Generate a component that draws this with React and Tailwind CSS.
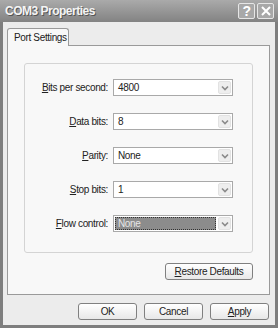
import React from 'react'

const FONT = { fontFamily: '"Liberation Sans", Arial, sans-serif' }

const ROWS = [
  { key: 'B', rest: 'its per second:', value: '4800' },
  { key: 'D', rest: 'ata bits:', value: '8' },
  { key: 'P', rest: 'arity:', value: 'None' },
  { key: 'S', rest: 'top bits:', value: '1' },
  { key: 'F', rest: 'low control:', value: 'None', focused: true },
]

function Chevron() {
  return (
    <svg width="8" height="6" viewBox="0 0 8 6">
      <path d="M1 1.5 L4 4.5 L7 1.5" fill="none" stroke="#8a8a8a" strokeWidth="1.6" />
    </svg>
  )
}

function Select({ value, focused }) {
  return (
    <div className="flex h-[17px] w-[120px] items-stretch border border-[#a9a9a9] bg-white">
      <div className="flex flex-1 items-center p-[1px]">
        {focused ? (
          <div className="flex h-full w-full items-center border border-dotted border-[#333] bg-[#8c8c8c] pl-[2px] text-[#e6e6e6]">
            {value}
          </div>
        ) : (
          <span className="pl-[3px] text-[#222]">{value}</span>
        )}
      </div>
      <div className="m-[1px] flex w-[13px] items-center justify-center rounded-[2px] border border-[#e2e2e2] bg-[#eeeeee]">
        <Chevron />
      </div>
    </div>
  )
}

function Button({ children, className = '' }) {
  return (
    <div
      className={`flex h-[17px] items-center justify-center whitespace-nowrap rounded-[3px] border border-[#808080] bg-gradient-to-b from-white to-[#e8e8e8] text-[#222] ${className}`}
    >
      <span>{children}</span>
    </div>
  )
}

function CaptionButton({ children }) {
  return (
    <div className="flex h-[16px] w-[17px] items-center justify-center rounded-[2px] border border-[#e6e6e6] bg-[#a8a8a8] text-[14px] font-bold leading-none text-white">
      {children}
    </div>
  )
}

export default function App() {
  return (
    <div className="flex h-[328px] w-[278px] flex-col bg-[#7e7e7e] text-[10px] tracking-[-0.35px]" style={FONT}>
      <div className="flex h-[22px] items-center justify-between bg-gradient-to-b from-[#aaaaaa] to-[#838383] pl-[5px] pr-[4px]">
        <span
          className="text-[12px] font-bold tracking-[-0.5px] text-[#f4f4f4]"
          style={{ textShadow: '1px 1px 0 #555' }}
        >
          COM3 Properties
        </span>
        <div className="flex gap-[2px]">
          <CaptionButton>?</CaptionButton>
          <CaptionButton>
            <svg width="10" height="10" viewBox="0 0 10 10">
              <path d="M1 1 L9 9 M9 1 L1 9" stroke="white" strokeWidth="2" />
            </svg>
          </CaptionButton>
        </div>
      </div>

      <div className="mx-[3px] mb-[3px] flex flex-1 flex-col bg-[#ececec] px-[4px] pt-[6px]">
        <div className="flex">
          <div className="z-10 -mb-px flex h-[18px] w-[62px] items-center whitespace-nowrap rounded-t-[3px] border border-b-0 border-[#9a9a9a] bg-[#f8f8f8] pl-[6px] text-[#222]">
            Port Settings
          </div>
        </div>
        <div className="flex h-[250px] w-[263px] flex-col border border-[#9a9a9a] bg-[#f8f8f8] px-[16px] pt-[17px]">
          <div className="flex h-[190px] flex-col gap-[17px] rounded-[3px] border border-[#d4d4d4] pt-[15px]">
            {ROWS.map((r) => (
              <div key={r.key} className="flex items-center">
                <div className="w-[83px] whitespace-nowrap text-right text-[#222]">
                  <span className="underline">{r.key}</span>
                  {r.rest}
                </div>
                <div className="ml-[5px]">
                  <Select value={r.value} focused={r.focused} />
                </div>
              </div>
            ))}
          </div>
          <div className="mt-[10px] flex justify-end">
            <Button className="w-[88px]">
              <span className="underline">R</span>estore Defaults
            </Button>
          </div>
        </div>
        <div className="mt-[8px] flex justify-end gap-[7px] pr-[2px]">
          <Button className="w-[59px]">OK</Button>
          <Button className="w-[59px]">Cancel</Button>
          <Button className="w-[59px]">
            <span className="underline">A</span>pply
          </Button>
        </div>
      </div>
    </div>
  )
}
